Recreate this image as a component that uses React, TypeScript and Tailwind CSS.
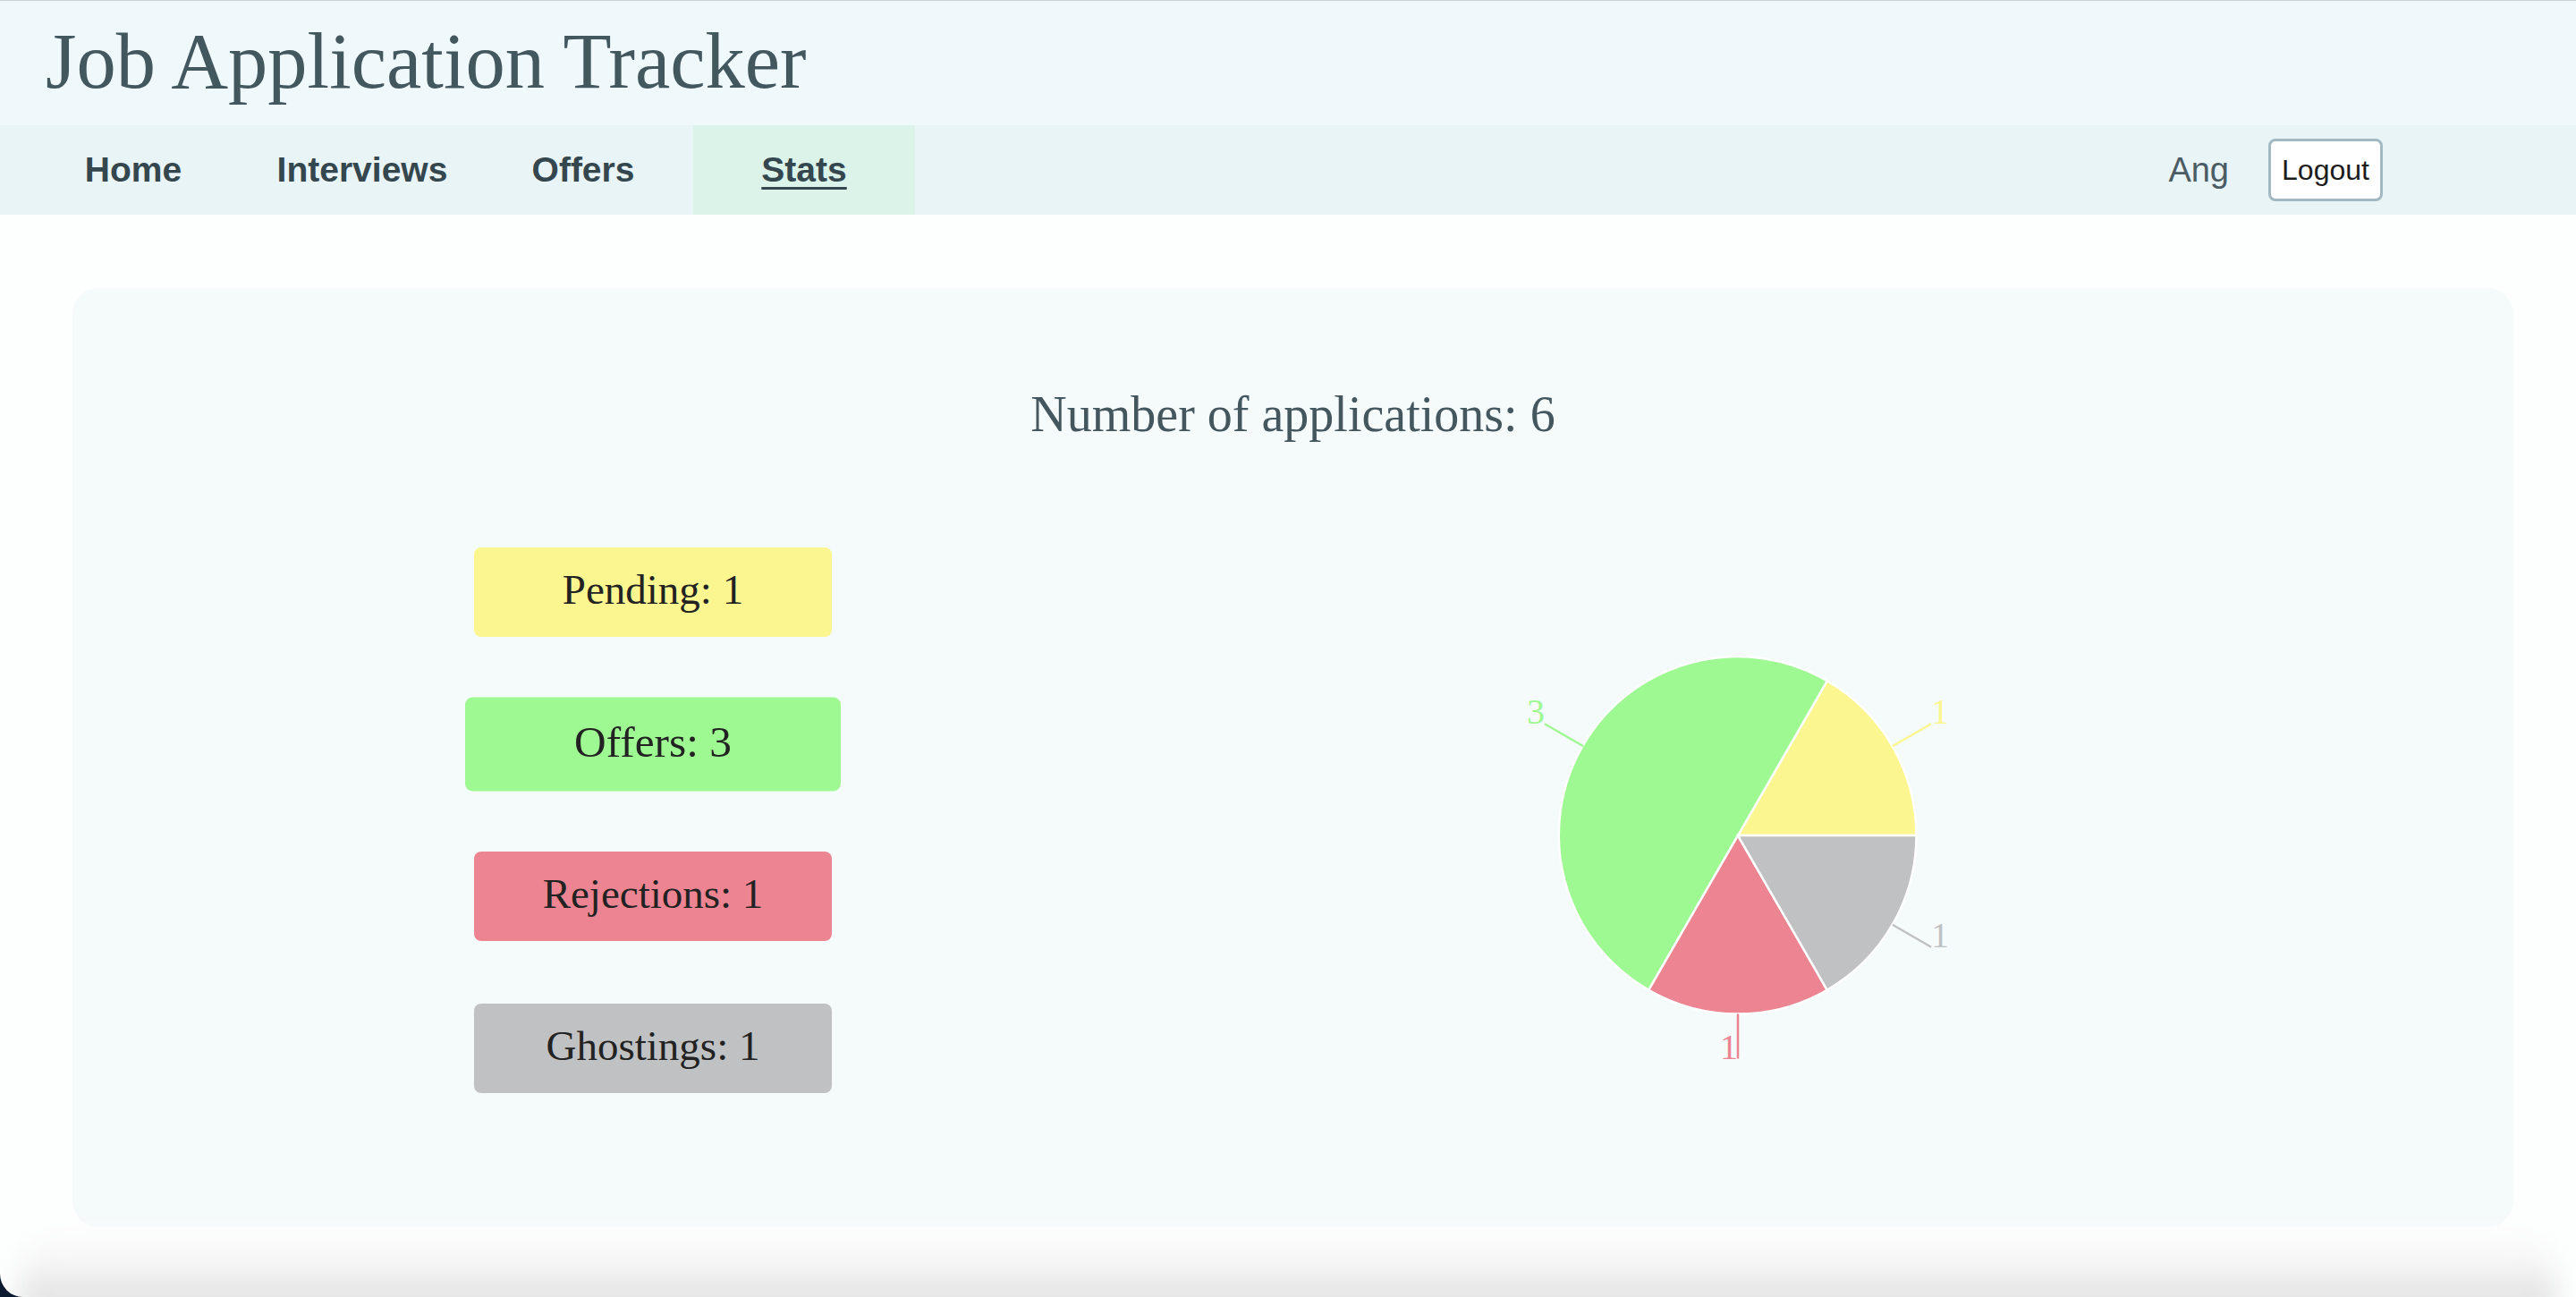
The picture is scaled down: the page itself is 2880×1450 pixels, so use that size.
import React from "react";

const cx = 300;
const cy = 322;
const r = 199.5;

const slices = [
  { color: "#fbf68f", d: `M${cx},${cy} L${cx + r},${cy} A${r},${r} 0 0 0 ${cx + 99.75},${cy - 172.77} Z`, label: "1", a: 30 },
  { color: "#9ff993", d: `M${cx},${cy} L${cx + 99.75},${cy - 172.77} A${r},${r} 0 1 0 ${cx - 99.75},${cy + 172.77} Z`, label: "3", a: 150 },
  { color: "#ec8591", d: `M${cx},${cy} L${cx - 99.75},${cy + 172.77} A${r},${r} 0 0 0 ${cx + 99.75},${cy + 172.77} Z`, label: "1", a: 270 },
  { color: "#c0c1c3", d: `M${cx},${cy} L${cx + 99.75},${cy + 172.77} A${r},${r} 0 0 0 ${cx + r},${cy} Z`, label: "1", a: 330 },
];

function Pie() {
  return (
    <svg width="600" height="610" viewBox="0 0 600 610" className="block">
      {slices.map((s, i) => (
        <path key={i} d={s.d} fill={s.color} stroke="#ffffff" strokeWidth={2.5} />
      ))}
      {slices.map((s, i) => {
        const rad = (s.a * Math.PI) / 180;
        const x1 = cx + r * Math.cos(rad);
        const y1 = cy - r * Math.sin(rad);
        const x2 = cx + (r + 50) * Math.cos(rad);
        const y2 = cy - (r + 50) * Math.sin(rad);
        const anchor = x2 > cx + 0.5 ? "start" : "end";
        return (
          <g key={"l" + i}>
            <path d={`M${x1},${y1} L${x2},${y2}`} stroke={s.color} strokeWidth={2.5} fill="none" />
            <text
              x={x2}
              y={y2}
              fill={s.color}
              textAnchor={anchor}
              fontSize={40}
              fontFamily="'Liberation Serif', 'Times New Roman', serif"
            >
              {s.label}
            </text>
          </g>
        );
      })}
    </svg>
  );
}

function StatBox({ label, bg, hovered }: { label: string; bg: string; hovered?: boolean }) {
  return (
    <div
      className={
        "w-[400px] h-[100px] rounded-[8px] flex items-center justify-center pb-[6px] text-[47px] text-[#222222] " +
        bg +
        (hovered ? " scale-105" : "")
      }
      style={{ fontFamily: "'Liberation Serif', 'Times New Roman', serif" }}
    >
      {label}
    </div>
  );
}

export default function App() {
  return (
    <div className="w-[2880px] h-[1450px] overflow-hidden bg-[#0c1a30]">
      <div className="w-full h-full bg-[#fdfefe] rounded-bl-[26px] overflow-hidden flex flex-col">
        {/* Header */}
        <header className="h-[140px] shrink-0 bg-[#eff9fc] border-t border-[#c6d3d9] flex items-center pl-[51px] pb-[4px]">
          <h1
            className="text-[88.5px] leading-none text-[#43575f]"
            style={{ fontFamily: "'Liberation Serif', 'Times New Roman', serif" }}
          >
            Job Application Tracker
          </h1>
        </header>

        {/* Nav */}
        <nav
          className="h-[100px] shrink-0 bg-[#e9f4f6] flex items-stretch"
          style={{ fontFamily: "'Liberation Sans', Arial, sans-serif" }}
        >
          <div className="flex items-stretch pl-[24px] text-[39px] font-bold text-[#34464e]">
            <div className="w-[250px] flex items-center justify-center">Home</div>
            <div className="w-[262px] flex items-center justify-center">Interviews</div>
            <div className="w-[232px] flex items-center justify-center">Offers</div>
            <div className="ml-[7px] w-[248px] flex items-center justify-center bg-[#dcf3ea] underline decoration-[3px] underline-offset-[6px]">
              Stats
            </div>
          </div>
          <div className="ml-auto flex items-center pr-[216px]">
            <span className="text-[38px] text-[#4b5c64] mr-[44px]">Ang</span>
            <button className="w-[128px] h-[70px] rounded-[8px] border-[3px] border-[#a2b9c3] bg-white flex items-center justify-center text-[32px] text-[#1c1c1c]">
              Logout
            </button>
          </div>
        </nav>

        {/* Card */}
        <div className="ml-[81px] mt-[82px] w-[2729px] h-[1050px] shrink-0 rounded-[30px] bg-[#f5fafb] pt-[109px]">
          <h2
            className="text-center text-[56px] leading-[64px] text-[#44565e]"
            style={{ fontFamily: "'Liberation Serif', 'Times New Roman', serif" }}
          >
            Number of applications: 6
          </h2>
          <div className="mt-[117px] flex items-start">
            <div className="ml-[449px] flex flex-col gap-[70px]">
              <StatBox label="Pending: 1" bg="bg-[#fbf68f]" />
              <StatBox label="Offers: 3" bg="bg-[#9ff993]" hovered />
              <StatBox label="Rejections: 1" bg="bg-[#ec8591]" />
              <StatBox label="Ghostings: 1" bg="bg-[#c0c1c3]" />
            </div>
            <div className="ml-[713px]">
              <Pie />
            </div>
          </div>
        </div>

        {/* bottom shadow */}
        <div className="mt-[4px] h-[90px] shrink-0 px-[22px]">
          <div className="h-full rounded-t-[50px] bg-gradient-to-b from-[#fefefe] via-[#f3f3f3] to-[#d9d9d9] blur-[14px]" />
        </div>
      </div>
    </div>
  );
}
